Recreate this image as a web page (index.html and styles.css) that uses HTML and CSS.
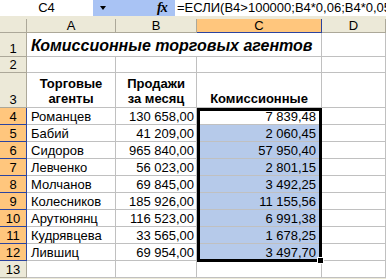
FILE: index.html
```html
<!DOCTYPE html>
<html>
<head>
<meta charset="utf-8">
<link rel="stylesheet" href="styles.css">
</head>
<body>
<div class="fbar">
  <div class="namebox">C4</div>
  <div class="fbtns">
    <span class="drop"></span>
    <span class="fx">fx</span>
  </div>
  <div class="formula">=ЕСЛИ(B4&gt;100000;B4*0,06;B4*0,05</div>
</div>
<div class="gap"></div>
<div class="sheet">
  <div class="hd corner"></div>
  <div class="hd">A</div>
  <div class="hd">B</div>
  <div class="hd hsel">C</div>
  <div class="hd">D</div>

  <div class="rh">1</div>
  <div class="c title">Комиссионные торговых агентов</div>
  <div class="c"></div>

  <div class="rh">2</div>
  <div class="c"></div><div class="c"></div><div class="c"></div><div class="c"></div>

  <div class="rh">3</div>
  <div class="c hdr">Торговые<br>агенты</div>
  <div class="c hdr">Продажи<br>за месяц</div>
  <div class="c hdr">Комиссионные</div>
  <div class="c"></div>

  <div class="rh rsel">4</div>
  <div class="c">Романцев</div><div class="c num">130 658,00</div><div class="c num act">7 839,48</div><div class="c"></div>
  <div class="rh rsel">5</div>
  <div class="c">Бабий</div><div class="c num">41 209,00</div><div class="c num bl">2 060,45</div><div class="c"></div>
  <div class="rh rsel">6</div>
  <div class="c">Сидоров</div><div class="c num">965 840,00</div><div class="c num bl">57 950,40</div><div class="c"></div>
  <div class="rh rsel">7</div>
  <div class="c">Левченко</div><div class="c num">56 023,00</div><div class="c num bl">2 801,15</div><div class="c"></div>
  <div class="rh rsel">8</div>
  <div class="c">Молчанов</div><div class="c num">69 845,00</div><div class="c num bl">3 492,25</div><div class="c"></div>
  <div class="rh rsel">9</div>
  <div class="c">Колесников</div><div class="c num">185 926,00</div><div class="c num bl">11 155,56</div><div class="c"></div>
  <div class="rh rsel">10</div>
  <div class="c">Арутюнянц</div><div class="c num">116 523,00</div><div class="c num bl">6 991,38</div><div class="c"></div>
  <div class="rh rsel">11</div>
  <div class="c">Кудрявцева</div><div class="c num">33 565,00</div><div class="c num bl">1 678,25</div><div class="c"></div>
  <div class="rh rsel">12</div>
  <div class="c">Лившиц</div><div class="c num">69 954,00</div><div class="c num bl">3 497,70</div><div class="c"></div>
  <div class="rh">13</div>
  <div class="c"></div><div class="c"></div><div class="c"></div><div class="c"></div>

  <div class="selbox"><span class="handle"></span></div>
</div>
</body>
</html>
```
FILE: styles.css
```css
html, body {
  margin: 0;
  padding: 0;
  width: 386px;
  height: 279px;
  overflow: hidden;
  background: #ECE9D8;
  font-family: "Liberation Sans", Arial, sans-serif;
  font-size: 13px;
  color: #000;
}
.fbar {
  display: flex;
  height: 16px;
  background: #fff;
}
.namebox {
  width: 93px;
  text-align: center;
  line-height: 16px;
}
.fbtns {
  width: 82px;
  background: #A9C3F4;
  display: flex;
  align-items: center;
}
.drop {
  margin-left: 7px;
  width: 0;
  height: 0;
  border-left: 3.5px solid transparent;
  border-right: 3.5px solid transparent;
  border-top: 4px solid #000;
}
.fx {
  margin-left: 51px;
  font-family: "Liberation Serif", serif;
  font-style: italic;
  font-weight: bold;
  font-size: 14px;
  letter-spacing: -1px;
  line-height: 16px;
}
.formula {
  flex: 1;
  padding-left: 2px;
  line-height: 16px;
  white-space: nowrap;
  overflow: hidden;
}
.gap {
  height: 3px;
}
.sheet {
  position: relative;
  display: grid;
  grid-template-columns: 27px 89px 81px 125px 1fr;
  grid-template-rows: 14px 24px 16px 35px repeat(10, 17px);
  background: #fff;
}
.hd {
  background: #ECE9D8;
  border-right: 1px solid #ACA899;
  border-bottom: 1px solid #ACA899;
  text-align: center;
  line-height: 13px;
}
.hsel {
  background: #FFC67D;
  border-bottom: 1px solid #2B44A0;
  border-right: 1px solid #2B44A0;
}
.rh {
  background: #ECE9D8;
  border-right: 1px solid #ACA899;
  border-bottom: 1px solid #ACA899;
  display: flex;
  align-items: flex-end;
  justify-content: center;
  line-height: 15px;
}
.rsel {
  background: #FFC67D;
  border-right: 1px solid #2B44A0;
  border-bottom: 1px solid #2B44A0;
}
.c {
  border-right: 1px solid #C0C0C0;
  border-bottom: 1px solid #C0C0C0;
  display: flex;
  align-items: flex-end;
  padding: 0 2px 0 4px;
  line-height: 15px;
  white-space: nowrap;
  overflow: hidden;
}
.title {
  grid-column: 2 / 5;
  font-weight: bold;
  font-style: italic;
  font-size: 16px;
  line-height: 20px;
  padding-left: 4px;
}
.hdr {
  font-weight: bold;
  justify-content: center;
  text-align: center;
  white-space: normal;
  padding: 0 0 1px 0;
}
.num {
  justify-content: flex-end;
}
.act {
  padding-right: 5px;
}
.bl {
  background: #B6CAEA;
  padding-right: 5px;
}
.selbox {
  position: absolute;
  left: 197px;
  top: 89px;
  width: 125px;
  height: 154px;
  box-sizing: border-box;
  border: 3px solid #000;
  pointer-events: none;
}
.handle {
  position: absolute;
  right: -5px;
  bottom: -5px;
  width: 5px;
  height: 5px;
  background: #000;
  border: 1px solid #fff;
}
```
